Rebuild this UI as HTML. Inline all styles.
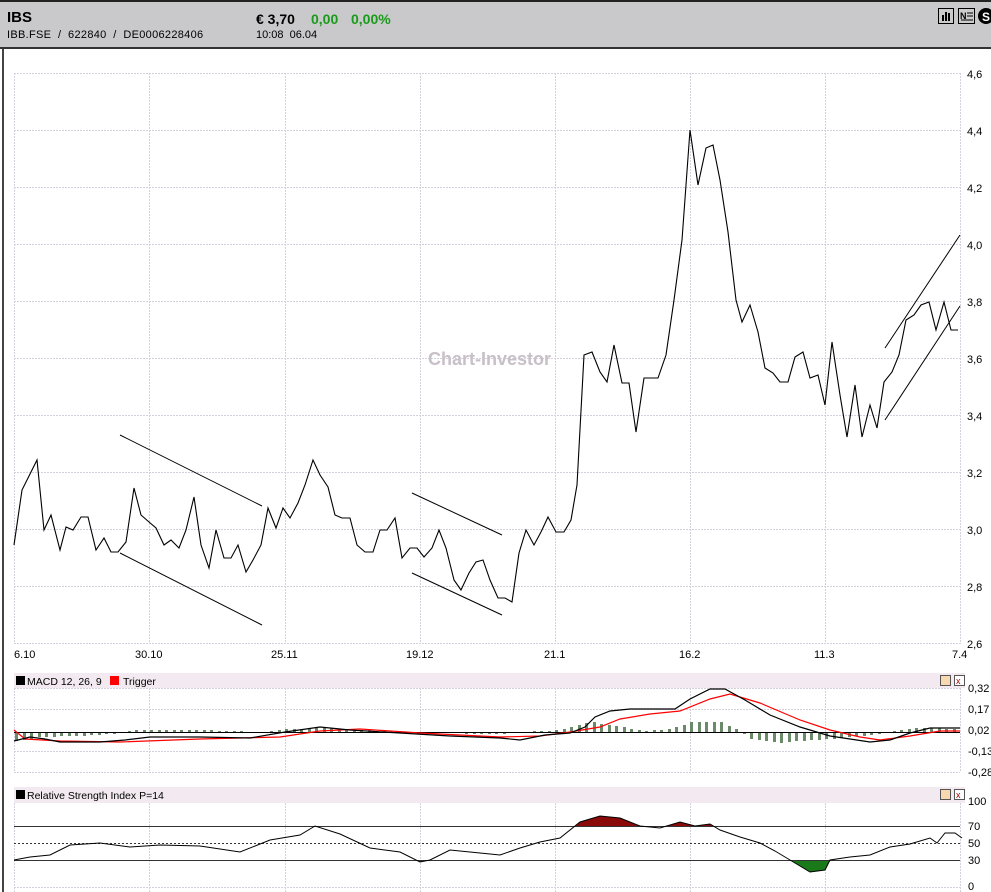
<!DOCTYPE html>
<html><head><meta charset="utf-8">
<style>
html,body{margin:0;padding:0;background:#fff;}
body{width:991px;height:892px;overflow:hidden;position:relative;font-family:"Liberation Sans",sans-serif;}
#hdr{position:absolute;left:0;top:0;width:991px;height:47px;background:#c9c9cb;border-top:2px solid #222;box-sizing:border-box;}
.t{position:absolute;white-space:nowrap;}
svg{position:absolute;left:0;top:0;}
</style></head><body>
<div id="hdr">
<div class="t" style="left:7px;top:7px;font-size:15px;font-weight:bold;color:#000">IBS</div>
<div class="t" style="left:7px;top:27px;font-size:11px;color:#000;letter-spacing:0.3px">IBB.FSE &nbsp;/ &nbsp;622840 &nbsp;/ &nbsp;DE0006228406</div>
<div class="t" style="left:256px;top:9px;font-size:14px;font-weight:bold;color:#000">€ 3,70</div>
<div class="t" style="left:311px;top:9px;font-size:14px;font-weight:bold;color:#1a9a1a">0,00</div>
<div class="t" style="left:351px;top:9px;font-size:14px;font-weight:bold;color:#1a9a1a">0,00%</div>
<div class="t" style="left:256px;top:27px;font-size:11px;color:#000">10:08 &nbsp;06.04</div>
</div>
<svg width="991" height="892" viewBox="0 0 991 892" id="s">
<!-- header icons -->
<rect x="938.5" y="8.5" width="15" height="15" fill="#ccc" stroke="#000"/>
<rect x="942" y="15" width="2" height="6" fill="#000"/><rect x="945" y="12" width="2" height="9" fill="#000"/><rect x="948" y="13" width="2" height="8" fill="#000"/>
<rect x="958.5" y="8.5" width="16" height="15" fill="#ccc" stroke="#000"/>
<text x="960" y="19" font-size="9" font-weight="bold" font-family="Liberation Sans">N</text>
<line x1="967" y1="13" x2="973" y2="13" stroke="#000"/><line x1="967" y1="16" x2="973" y2="16" stroke="#000"/><line x1="961" y1="20" x2="973" y2="20" stroke="#000"/>
<circle cx="986" cy="16" r="8" fill="#000"/>
<text x="982" y="21" font-size="12" font-weight="bold" fill="#fff" font-family="Liberation Sans">S</text>
<!-- borders -->
<rect x="0" y="47" width="991" height="2" fill="#333"/>
<rect x="2" y="49" width="2" height="843" fill="#444"/>
<g stroke="#d4d0dc" stroke-width="1" stroke-dasharray="2,1" fill="none">
<line x1="14" y1="73.5" x2="960" y2="73.5"/><line x1="14" y1="130.5" x2="960" y2="130.5"/><line x1="14" y1="187.5" x2="960" y2="187.5"/><line x1="14" y1="244.5" x2="960" y2="244.5"/><line x1="14" y1="301.5" x2="960" y2="301.5"/><line x1="14" y1="358.5" x2="960" y2="358.5"/><line x1="14" y1="415.5" x2="960" y2="415.5"/><line x1="14" y1="472.5" x2="960" y2="472.5"/><line x1="14" y1="529.5" x2="960" y2="529.5"/><line x1="14" y1="586.5" x2="960" y2="586.5"/><line x1="14" y1="643.5" x2="960" y2="643.5"/>
<line x1="14.5" y1="73" x2="14.5" y2="644"/><line x1="149.5" y1="73" x2="149.5" y2="644"/><line x1="285.5" y1="73" x2="285.5" y2="644"/><line x1="420.5" y1="73" x2="420.5" y2="644"/><line x1="555.5" y1="73" x2="555.5" y2="644"/><line x1="690.5" y1="73" x2="690.5" y2="644"/><line x1="825.5" y1="73" x2="825.5" y2="644"/><line x1="960.5" y1="73" x2="960.5" y2="644"/>
<!-- macd grid -->
<line x1="14" y1="688.5" x2="960" y2="688.5"/><line x1="14" y1="709.5" x2="960" y2="709.5"/><line x1="14" y1="751.5" x2="960" y2="751.5"/><line x1="14" y1="772.5" x2="960" y2="772.5"/>
<line x1="14.5" y1="688" x2="14.5" y2="772"/><line x1="149.5" y1="688" x2="149.5" y2="772"/><line x1="285.5" y1="688" x2="285.5" y2="772"/><line x1="420.5" y1="688" x2="420.5" y2="772"/><line x1="555.5" y1="688" x2="555.5" y2="772"/><line x1="690.5" y1="688" x2="690.5" y2="772"/><line x1="825.5" y1="688" x2="825.5" y2="772"/><line x1="960.5" y1="688" x2="960.5" y2="772"/>
<!-- rsi grid -->
<line x1="14.5" y1="803" x2="14.5" y2="892"/><line x1="149.5" y1="803" x2="149.5" y2="892"/><line x1="285.5" y1="803" x2="285.5" y2="892"/><line x1="420.5" y1="803" x2="420.5" y2="892"/><line x1="555.5" y1="803" x2="555.5" y2="892"/><line x1="690.5" y1="803" x2="690.5" y2="892"/><line x1="825.5" y1="803" x2="825.5" y2="892"/><line x1="960.5" y1="803" x2="960.5" y2="892"/>
<line x1="14" y1="887.5" x2="960" y2="887.5"/>
</g>
<g font-family="Liberation Sans" font-size="11" fill="#000">
<text x="967" y="78">4,6</text><text x="967" y="135">4,4</text><text x="967" y="192">4,2</text><text x="967" y="249">4,0</text><text x="967" y="306">3,8</text><text x="967" y="363">3,6</text><text x="967" y="420">3,4</text><text x="967" y="477">3,2</text><text x="967" y="534">3,0</text><text x="967" y="591">2,8</text><text x="967" y="648">2,6</text>
<text x="14" y="658">6.10</text><text x="135" y="658">30.10</text><text x="271" y="658">25.11</text><text x="406" y="658">19.12</text><text x="544" y="658">21.1</text><text x="679" y="658">16.2</text><text x="814" y="658">11.3</text><text x="952" y="658">7.4</text>
<text x="968" y="692">0,32</text><text x="968" y="713">0,17</text><text x="968" y="734">0,02</text><text x="968" y="755">-0,13</text><text x="968" y="776">-0,28</text>
<text x="968" y="805">100</text><text x="968" y="830">70</text><text x="968" y="847">50</text><text x="968" y="864">30</text><text x="968" y="890">0</text>
</g>
<text x="428" y="365" font-family="Liberation Sans" font-size="18" font-weight="bold" fill="#c8c0c8">Chart-Investor</text>
<!-- price -->
<polyline fill="none" stroke="#000" stroke-width="1.1" points="14,545 22,490 37,460 44,530 51,515 60,550 66,527 73,530 81,517 88,517 96,550 104,538 111,552 118,552 126,542 134,488 141,515 149,522 156,528 164,545 171,540 179,548 186,530 194,497 201,545 209,568 216,530 224,558 231,558 238,545 246,572 253,560 261,545 268,508 276,528 283,508 290,518 298,503 305,485 313,460 320,475 328,487 335,515 342,518 350,518 357,545 365,552 373,552 380,530 387,530 395,518 402,558 410,548 417,548 424,557 432,548 439,530 446,548 454,580 461,590 469,573 476,562 483,560 490,580 498,598 505,598 512,602 519,553 526,530 534,545 541,532 548,517 556,532 564,532 571,520 577,485 584,355 592,352 600,372 607,382 614,345 622,383 629,383 636,432 644,378 651,378 658,378 666,355 674,300 682,240 690,130 698,185 706,148 713,145 720,180 728,232 736,300 742,322 750,305 758,332 765,368 773,373 780,382 788,382 795,357 803,352 810,378 818,375 825,405 832,342 840,395 847,437 855,385 862,437 870,405 877,428 884,382 892,372 899,355 906,320 914,315 921,305 929,302 936,330 944,302 951,330 958,330"/>
<g stroke="#000" stroke-width="1">
<line x1="120" y1="435" x2="262" y2="506"/><line x1="120" y1="553" x2="262" y2="625"/>
<line x1="412" y1="493" x2="502" y2="535"/><line x1="412" y1="573" x2="502" y2="615"/>
<line x1="885" y1="348" x2="960" y2="235"/><line x1="885" y1="420" x2="960" y2="306"/>
</g>
<!-- MACD header -->
<rect x="14" y="673" width="951" height="15" fill="#f2eaf0"/>
<rect x="16" y="676" width="9" height="9" fill="#000"/>
<text x="27" y="685" font-family="Liberation Sans" font-size="10.5">MACD 12, 26, 9</text>
<rect x="110" y="676" width="9" height="9" fill="#f00"/>
<text x="123" y="685" font-family="Liberation Sans" font-size="10.5">Trigger</text>
<rect x="940.5" y="675.5" width="10" height="10" fill="#f8d8b0" stroke="#555"/>
<rect x="954.5" y="675.5" width="10" height="10" fill="#fff" stroke="#555"/>
<text x="956" y="684" font-size="9" fill="#a00" font-family="Liberation Sans">x</text>
<g id="hist" fill="#6a8a6a"></g>
<line x1="14" y1="732.5" x2="960" y2="732.5" stroke="#000"/>
<polyline fill="none" stroke="#f00" stroke-width="1.2" points="14,730 25,739 60,741 120,742 200,739 280,737 320,731 360,729 420,733 500,737 540,736 570,732 600,727 620,719 650,714 680,711 710,699 730,694 760,703 800,720 830,730 860,737 880,740 910,736 940,731 960,731"/>
<polyline fill="none" stroke="#000" stroke-width="1.2" points="14,741 30,737 45,739 60,742 100,742 125,740 150,737 200,737 250,738 285,732 320,727 350,730 400,733 450,736 500,738 520,740 545,735 570,733 585,727 595,717 610,711 630,709 660,709 675,709 690,699 710,689 725,689 745,700 770,715 800,727 830,736 870,742 890,740 910,733 930,728 960,728"/>
<!-- RSI header -->
<rect x="14" y="787" width="951" height="16" fill="#f2eaf0"/>
<rect x="16" y="790" width="9" height="9" fill="#000"/>
<text x="27" y="799" font-family="Liberation Sans" font-size="10.5">Relative Strength Index P=14</text>
<rect x="940.5" y="789.5" width="10" height="10" fill="#f8d8b0" stroke="#555"/>
<rect x="954.5" y="789.5" width="10" height="10" fill="#fff" stroke="#555"/>
<text x="956" y="798" font-size="9" fill="#a00" font-family="Liberation Sans">x</text>
<defs>
<clipPath id="top"><rect x="0" y="780" width="991" height="46"/></clipPath>
<clipPath id="bot"><rect x="0" y="860" width="991" height="40"/></clipPath>
</defs>
<path id="rf" clip-path="url(#top)" fill="#8a0a0a"/>
<path id="gf" clip-path="url(#bot)" fill="#1a7a1a"/>
<line x1="14" y1="826.5" x2="960" y2="826.5" stroke="#333"/>
<line x1="14" y1="843.5" x2="960" y2="843.5" stroke="#333" stroke-dasharray="2,2"/>
<line x1="14" y1="860.5" x2="960" y2="860.5" stroke="#333"/>
<polyline id="rsi" fill="none" stroke="#000" stroke-width="1" points="14,860 30,857 50,855 70,845 100,843 130,847 160,845 200,846 240,852 270,840 300,835 315,826 340,834 370,848 400,852 420,862 430,860 450,850 480,853 500,855 520,848 540,842 560,838 580,822 600,816 620,818 640,826 660,828 680,822 695,826 710,824 720,830 740,837 760,843 775,851 790,860 800,866 810,872 825,870 830,860 850,857 870,855 890,847 910,844 930,838 937,843 945,833 955,833 962,838"/>
</svg>
<script>
(function(){
var p=document.getElementById('rsi').getAttribute('points');
document.getElementById('rf').setAttribute('d','M14,826 L'+p.trim().split(/\s+/).join(' L')+' L962,826 Z');
document.getElementById('gf').setAttribute('d','M14,860 L'+p.trim().split(/\s+/).join(' L')+' L962,860 Z');
var ns='http://www.w3.org/2000/svg',g=document.getElementById('hist');
var segs=[[14,-8],[40,-4],[100,-2],[135,2],[200,2],[260,0],[290,3],[320,4],[380,1],[420,0],[500,-1],[560,2],[590,10],[620,5],[640,1],[670,3],[690,10],[720,10],[740,0],[750,-6],[780,-10],[800,-8],[830,-6],[870,-2],[900,2],[920,4],[958,3]];
function h(x){for(var i=0;i<segs.length-1;i++){var a=segs[i],b=segs[i+1];if(x>=a[0]&&x<=b[0])return a[1]+(b[1]-a[1])*(x-a[0])/(b[0]-a[0]);}return 0;}
for(var x=15;x<958;x+=7.5){var v=Math.round(h(x));if(v===0)continue;var r=document.createElementNS(ns,'rect');r.setAttribute('x',Math.round(x));r.setAttribute('width',3);if(v>0){r.setAttribute('y',732-v);r.setAttribute('height',v);}else{r.setAttribute('y',733);r.setAttribute('height',-v);}g.appendChild(r);}
})();
</script>
</body></html>
